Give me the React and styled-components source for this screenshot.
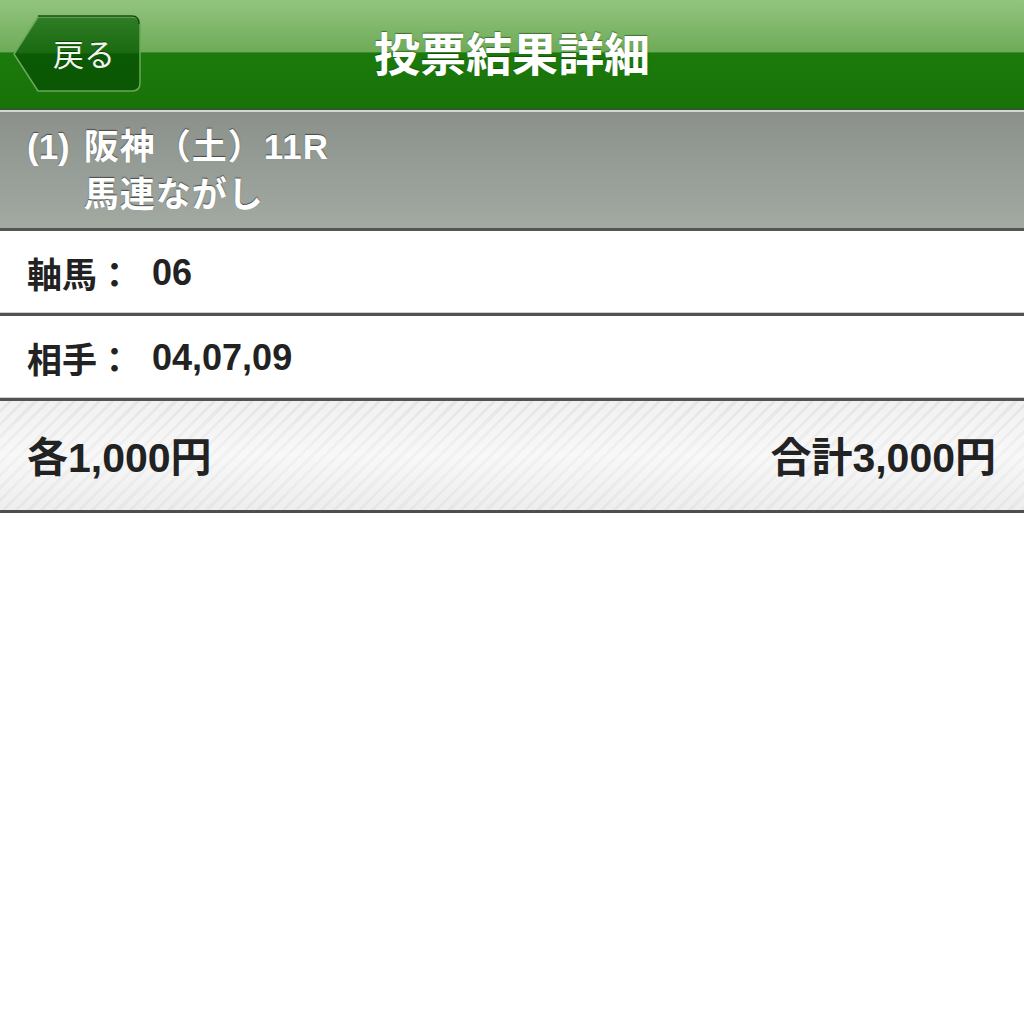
import React from "react";
import styled, { createGlobalStyle } from "styled-components";

const Global = createGlobalStyle`
  html, body { margin: 0; padding: 0; background: #fff; }
  body { font-family: "Liberation Sans", "Noto Sans CJK JP", sans-serif; }
`;

const Page = styled.div`
  width: 1024px;
  min-height: 1024px;
  background: #fff;
`;

const Header = styled.header`
  height: 108px;
  display: grid;
  grid-template-columns: 1fr auto 1fr;
  align-items: center;
  background: linear-gradient(
    to bottom,
    #93c47f 0%,
    #6eab58 48%,
    #1c7a0c 49%,
    #187208 100%
  );
  border-bottom: 2px solid #2f5a2a;
  box-shadow: 0 2px 0 #d3d6d3;
  position: relative;
  z-index: 1;
`;

const BackButton = styled.button`
  position: relative;
  justify-self: start;
  margin-left: 12px;
  width: 130px;
  height: 79px;
  border: none;
  background: transparent;
  padding: 0 0 0 14px;
  display: flex;
  align-items: center;
  justify-content: center;
  color: #f2f6ee;
  font-family: "Noto Sans CJK JP", sans-serif;
  font-size: 31px;
  font-weight: 400;
  cursor: pointer;
  text-shadow: 0 -1px 0 rgba(0, 40, 0, 0.6);
`;

const ButtonShape = styled.svg`
  position: absolute;
  left: 0;
  top: 0;
  width: 130px;
  height: 79px;
`;

const ButtonLabel = styled.span`
  position: relative;
  margin-top: -4px;
`;

const Title = styled.h1`
  margin: 0;
  color: #fff;
  font-family: "Noto Sans CJK JP", sans-serif;
  font-weight: 700;
  font-size: 46px;
  text-shadow: 0 -1px 1px rgba(0, 50, 0, 0.5);
  margin-top: -6px;
`;

const RaceInfo = styled.section`
  margin-top: 2px;
  height: 119px;
  box-sizing: border-box;
  padding: 11px 0 0 27px;
  background: linear-gradient(to bottom, #8b908b 0%, #a2aaa2 100%);
  border-bottom: 3px solid #545654;
  color: #fff;
  font-family: "Liberation Sans", "Noto Sans CJK JP", sans-serif;
  font-weight: 700;
  font-size: 35px;
  line-height: 48px;
  text-shadow: 0 -1px 1px rgba(40, 40, 40, 0.7);
  display: grid;
  grid-template-columns: auto 1fr;
  column-gap: 14px;
  align-content: start;
`;

const RaceNo = styled.span``;
const RaceLine = styled.span`
  grid-column: 2;
  letter-spacing: 1px;
`;

const Row = styled.div`
  height: 85px;
  box-sizing: border-box;
  padding: 0 27px;
  display: flex;
  align-items: center;
  border-bottom: 3px solid #525252;
  box-shadow: inset 0 -1px 0 #cfcfcf;
  color: #222;
  font-family: "Liberation Sans", "Noto Sans CJK JP", sans-serif;
  font-weight: 700;
  font-size: 35px;
`;

const RowLabel = styled.span`
  margin-right: 20px;
`;

const RowValue = styled.span`
  padding-top: 2px;
  font-size: 36px;
`;

const Summary = styled.div`
  height: 112px;
  box-sizing: border-box;
  padding: 0 28px 4px 27px;
  display: flex;
  align-items: center;
  justify-content: space-between;
  border-bottom: 3px solid #4e4e4e;
  background:
    linear-gradient(to bottom, rgba(255,255,255,0) 0%, rgba(255,255,255,0.5) 50%, rgba(230,230,230,0.3) 100%),
    repeating-linear-gradient(
      135deg,
      #f1f1f1 0px,
      #f1f1f1 6px,
      #e5e5e5 6px,
      #e5e5e5 9px
    );
  color: #222;
  font-family: "Liberation Sans", "Noto Sans CJK JP", sans-serif;
  font-weight: 700;
  font-size: 41px;
`;

const Amount = styled.span``;

export default function App() {
  return (
    <Page>
      <Global />
      <Header>
        <BackButton>
          <ButtonShape viewBox="0 0 130 79">
            <defs>
              <linearGradient id="bg" x1="0" y1="0" x2="0" y2="1">
                <stop offset="0" stopColor="#2f7d24" />
                <stop offset="0.48" stopColor="#1a6a12" />
                <stop offset="0.5" stopColor="#0b5a05" />
                <stop offset="1" stopColor="#0a5604" />
              </linearGradient>
            </defs>
            <path
              d="M26 2 H120 Q128 2 128 10 V68 Q128 76 120 76 H26 L2 39 Z"
              fill="url(#bg)"
              stroke="#6aa85a"
              strokeWidth="1.5"
              strokeLinejoin="round"
            />
            <path
              d="M26 1 H120 Q127 1 127 9"
              fill="none"
              stroke="#174f12"
              strokeWidth="1.5"
            />
          </ButtonShape>
          <ButtonLabel>戻る</ButtonLabel>
        </BackButton>
        <Title>投票結果詳細</Title>
        <span />
      </Header>
      <RaceInfo>
        <RaceNo>(1)</RaceNo>
        <RaceLine>阪神（土）11R</RaceLine>
        <RaceLine>馬連ながし</RaceLine>
      </RaceInfo>
      <Row>
        <RowLabel>軸馬：</RowLabel>
        <RowValue>06</RowValue>
      </Row>
      <Row>
        <RowLabel>相手：</RowLabel>
        <RowValue>04,07,09</RowValue>
      </Row>
      <Summary>
        <Amount>各1,000円</Amount>
        <Amount>合計3,000円</Amount>
      </Summary>
    </Page>
  );
}
